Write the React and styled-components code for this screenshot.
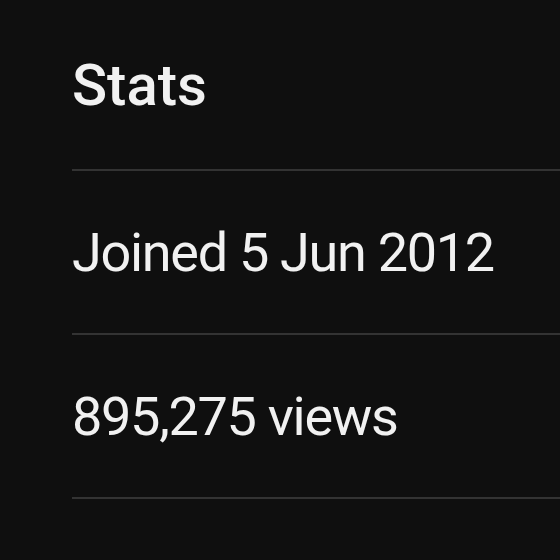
import React from "react";
import styled, { createGlobalStyle } from "styled-components";

const Global = createGlobalStyle`
    body {
        margin: 0;
        background: #0f0f0f;
        font-family: Roboto, "Liberation Sans", sans-serif;
    }
`;

const Section = styled.section`
    padding: 56px 0 0 72px;
    height: 560px;
    box-sizing: border-box;
    overflow: hidden;
`;

const Title = styled.h2`
    margin: 0 0 55px;
    font-size: 58px;
    font-weight: 500;
    line-height: 1;
    color: #f1f1f1;
`;

const Row = styled.div`
    border-top: 2px solid #333;
    padding: 55px 0 53px;
    font-size: 54px;
    letter-spacing: -1.3px;
    line-height: 1;
    color: #f1f1f1;
    &:last-child {
        border-bottom: 2px solid #333;
    }
`;

const stats = ["Joined 5 Jun 2012", "895,275 views"];

const App = () => {
    return (
        <>
            <Global />
            <Section>
                <Title>Stats</Title>
                {stats.map((s) => (
                    <Row key={s}>{s}</Row>
                ))}
            </Section>
        </>
    );
};

export default App;
